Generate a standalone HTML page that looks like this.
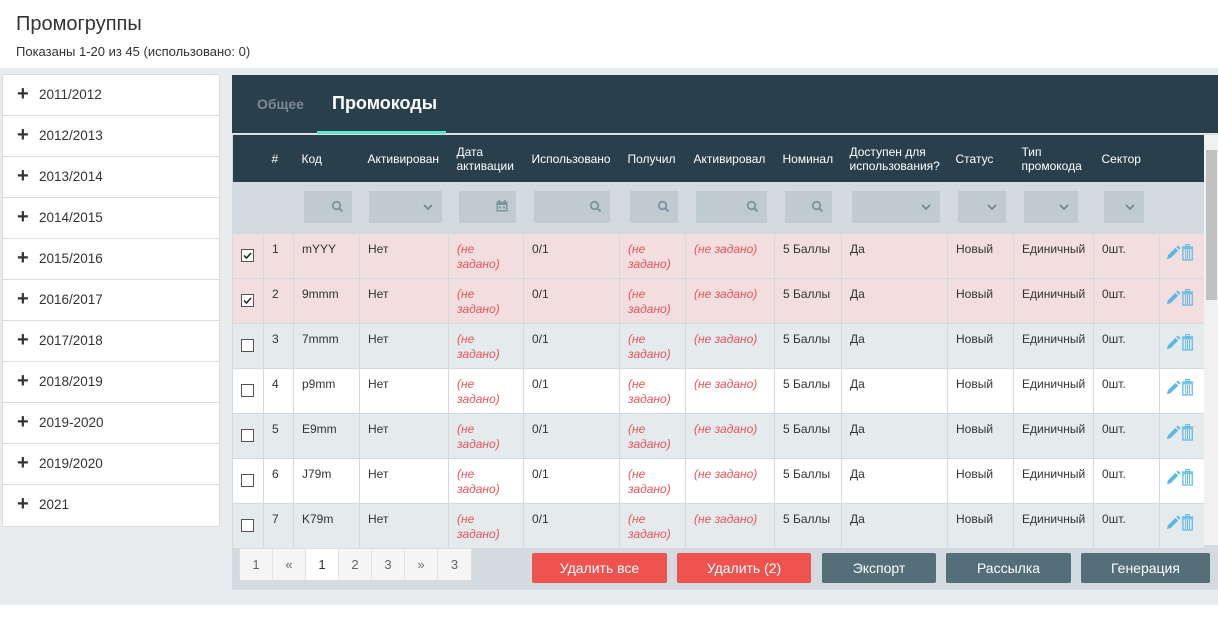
<!DOCTYPE html>
<html><head><meta charset="utf-8"><style>
*{box-sizing:border-box;margin:0;padding:0}
body{width:1218px;height:618px;overflow:hidden;background:#fff;font-family:"Liberation Sans",sans-serif;color:#333;position:relative}
.a{position:absolute}
h1{position:absolute;left:16px;top:13px;font-size:20px;font-weight:normal;color:#333}
.sub{left:16px;top:44px;font-size:13px;color:#333}
.bg{left:0;top:68px;width:1218px;height:537px;background:#e9ecef}
.side{left:2px;top:74px;width:218px;background:#fff;border:1px solid #ddd}
.side div{height:41px;border-bottom:1px solid #ddd;font-size:13.5px;line-height:38px;padding-left:14px;color:#333}
.side div:last-child{border-bottom:0}
.side b{font-size:20px;font-weight:bold;margin-right:6px;display:inline-block;width:16px;vertical-align:-1px}
.panel{left:232px;top:75px;width:986px;height:515px;background:#d3dbe1}
.top{left:0;top:0;width:986px;height:59px;background:#293f4c;border-bottom:1px solid #e0e6ea}
.t1{left:25px;top:21px;font-size:14px;font-weight:bold;color:#7d8a93}
.t2{left:100px;top:18px;font-size:18px;font-weight:bold;color:#fff}
.ul{left:85px;top:56px;width:129px;height:3px;background:#5ce6cc}
table{position:absolute;left:0;top:60px;border-collapse:collapse;table-layout:fixed;width:972px;font-size:12px}
th{background:#293f4c;color:#fff;font-weight:normal;text-align:left;height:47px;padding:0 0 0 8px;line-height:14px;vertical-align:middle}
tr.f td{background:#d3dbe1;height:51px;border:0;padding:0 0 0 8px;vertical-align:middle}
td{height:45px;border:1px solid #d3d9de;vertical-align:top;padding:8px 0 0 8px;line-height:15px}
tr.s td{background:#f2dede}
tr.o td{background:#e5eaed}
tr.w td{background:#fff}
.r{color:#e8545a;font-style:italic}
.fi{height:32px;background:#bfcbd1;position:relative}
.fi svg{position:absolute;right:8px;top:9px}
.cb{width:13px;height:13px;border:1px solid #555;background:#fff;display:block;margin-top:7px;position:relative}
.sb{left:972px;top:60px;width:14px;height:410px;background:#f1f1f1}
.sbt{left:974px;top:75px;width:11px;height:150px;background:#c1c1c1}
.pg{left:7px;top:473px;height:33px;display:flex;border:1px solid #ddd;background:#f5f5f5}
.pg span{width:33px;text-align:center;line-height:31px;font-size:13px;color:#666;border-right:1px solid #e3e3e3}
.btn{top:478px;height:30px;color:#fff;font-size:14px;text-align:center;line-height:30px;border-radius:2px}
.red{background:#ef5350}.gr{background:#546e7a}
</style></head><body>
<h1>Промогруппы</h1>
<div class="a sub">Показаны 1-20 из 45 (использовано: 0)</div>
<div class="a bg"></div>
<div class="a side">
<div><b>+</b>2011/2012</div><div><b>+</b>2012/2013</div><div><b>+</b>2013/2014</div><div><b>+</b>2014/2015</div><div><b>+</b>2015/2016</div><div><b>+</b>2016/2017</div><div><b>+</b>2017/2018</div><div><b>+</b>2018/2019</div><div><b>+</b>2019-2020</div><div><b>+</b>2019/2020</div><div><b>+</b>2021</div>
</div>
<div class="a panel">
<div class="a top"><div class="a t1">Общее</div><div class="a t2">Промокоды</div><div class="a ul"></div></div>
<table>
<colgroup><col style="width:31px"><col style="width:30px"><col style="width:66px"><col style="width:89px"><col style="width:75px"><col style="width:96px"><col style="width:66px"><col style="width:89px"><col style="width:67px"><col style="width:106px"><col style="width:66px"><col style="width:80px"><col style="width:66px"><col style="width:45px"></colgroup>
<tr><th></th><th>#</th><th>Код</th><th>Активирован</th><th>Дата<br>активации</th><th>Использовано</th><th>Получил</th><th>Активировал</th><th>Номинал</th><th>Доступен для<br>использования?</th><th>Статус</th><th>Тип<br>промокода</th><th>Сектор</th><th></th></tr>
<tr class="f"><td></td><td></td>
<td style="padding-right:8px;padding-left:10px"><div class="fi">S</div></td>
<td style="padding-right:7px;padding-left:9px"><div class="fi">V</div></td>
<td style="padding-right:8px;padding-left:10px"><div class="fi">C</div></td>
<td style="padding-right:10px;padding-left:10px"><div class="fi">S</div></td>
<td style="padding-right:8px;padding-left:10px"><div class="fi">S</div></td>
<td style="padding-right:8px;padding-left:10px"><div class="fi">S</div></td>
<td style="padding-right:10px;padding-left:10px"><div class="fi">S</div></td>
<td style="padding-right:8px;padding-left:10px"><div class="fi">V</div></td>
<td style="padding-right:8px;padding-left:10px"><div class="fi">V</div></td>
<td style="padding-right:16px;padding-left:10px"><div class="fi">V</div></td>
<td style="padding-right:16px;padding-left:10px"><div class="fi">V</div></td>
<td></td></tr>
ROWS
</table>
<div class="a sb"></div><div class="a sbt"></div>
<div class="a pg"><span>1</span><span>«</span><span style="background:#fff;color:#333">1</span><span>2</span><span>3</span><span>»</span><span style="border:0">3</span></div>
<div class="a btn red" style="left:300px;width:135px">Удалить все</div>
<div class="a btn red" style="left:445px;width:134px">Удалить (2)</div>
<div class="a btn gr" style="left:590px;width:114px">Экспорт</div>
<div class="a btn gr" style="left:714px;width:125px">Рассылка</div>
<div class="a btn gr" style="left:849px;width:129px">Генерация</div>
</div>
<script>
var S='<svg width="13" height="13" viewBox="0 0 13 13"><circle cx="5.5" cy="5.5" r="3.8" fill="none" stroke="#7d939f" stroke-width="1.8"/><path d="M8.3 8.3L11.5 11.5" stroke="#7d939f" stroke-width="2"/></svg>';
var V='<svg width="12" height="12" viewBox="0 0 12 12" style="top:10px"><path d="M2 4L6 8L10 4" fill="none" stroke="#6f8490" stroke-width="1.6"/></svg>';
var C='<svg width="12" height="12" viewBox="0 0 12 12"><rect x="0.5" y="1.5" width="11" height="10" fill="#7d939f"/><rect x="2" y="5" width="8" height="5" fill="#bfcbd1"/><rect x="3" y="6.5" width="2" height="2" fill="#7d939f"/><rect x="7" y="6.5" width="2" height="2" fill="#7d939f"/><rect x="2.5" y="0" width="1.5" height="2.5" fill="#7d939f"/><rect x="8" y="0" width="1.5" height="2.5" fill="#7d939f"/></svg>';
document.querySelectorAll('.fi').forEach(function(e){var t=e.textContent;e.innerHTML=t=='S'?S:t=='V'?V:C;});
var codes=['mYYY','9mmm','7mmm','p9mm','E9mm','J79m','K79m'];
var cls=['s','s','o','w','o','w','o'];
var icons='<svg width="30" height="17" viewBox="0 0 32 18" style="margin-top:2px"><path d="M1 16L2 12L10 4L13 7L5 15Z" fill="#5bb8e6"/><path d="M11 3L12.5 1.5L15.5 4.5L14 6Z" fill="#5bb8e6"/><rect x="17" y="2.5" width="12" height="1.5" fill="#5bb8e6"/><rect x="21" y="0.5" width="4" height="2" fill="none" stroke="#5bb8e6" stroke-width="1"/><rect x="18" y="5" width="10" height="12" fill="none" stroke="#5bb8e6" stroke-width="1.3"/><path d="M21 6V16M23 6V16M25 6V16" stroke="#5bb8e6" stroke-width="1"/></svg>';
var h='';
for(var i=0;i<7;i++){
var chk=i<2?'<span class="cb"><svg width="11" height="11" viewBox="0 0 11 11" style="position:absolute;left:0;top:0"><path d="M2 5.5L4.5 8L9 3" fill="none" stroke="#222" stroke-width="1.5"/></svg></span>':'<span class="cb"></span>';
h+='<tr class="'+cls[i]+'"><td style="padding-left:8px">'+chk+'</td><td>'+(i+1)+'</td><td>'+codes[i]+'</td><td>Нет</td><td class="r">(не<br>задано)</td><td>0/1</td><td class="r">(не<br>задано)</td><td class="r">(не задано)</td><td>5 Баллы</td><td>Да</td><td>Новый</td><td>Единичный</td><td>0шт.</td><td style="padding-left:6px">'+icons+'</td></tr>';}
var t=document.querySelector('table');t.innerHTML=t.innerHTML.replace('ROWS','');
t.querySelector('tbody').insertAdjacentHTML('beforeend',h);
</script>
</body></html>
